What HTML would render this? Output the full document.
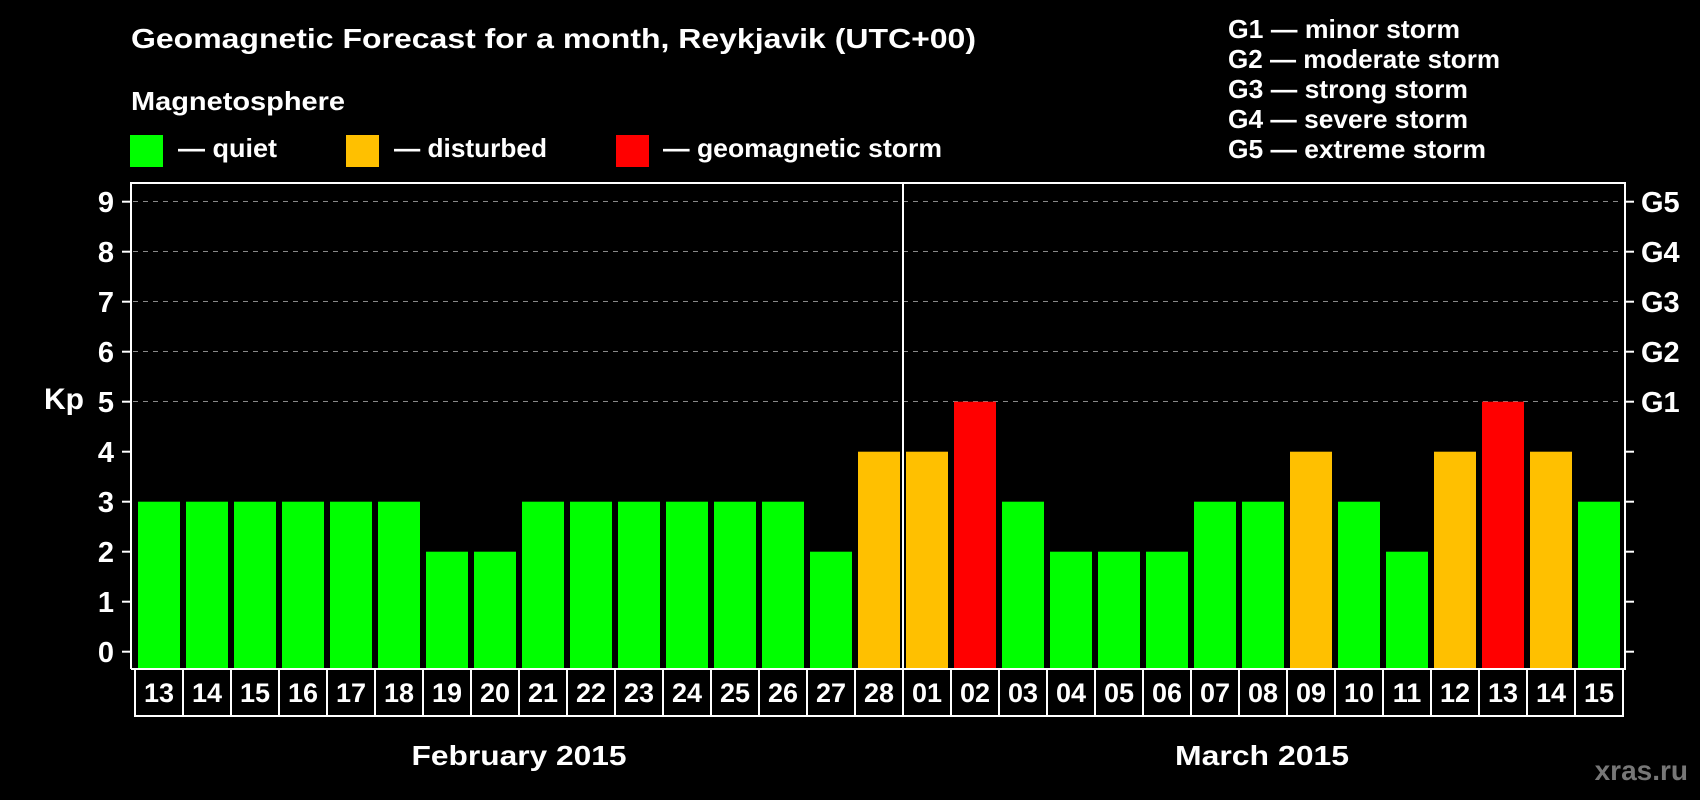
<!DOCTYPE html>
<html><head><meta charset="utf-8"><style>
html,body{margin:0;padding:0;background:#000;}
svg{display:block;font-family:"Liberation Sans",Arial,sans-serif;font-weight:bold;}
</style></head><body>
<svg width="1700" height="800" viewBox="0 0 1700 800" xmlns="http://www.w3.org/2000/svg">
<rect width="1700" height="800" fill="#000"/>
<g fill="#fff">
<text x="131" y="48" font-size="28" textLength="845" lengthAdjust="spacingAndGlyphs">Geomagnetic Forecast for a month, Reykjavik (UTC+00)</text>
<text x="131" y="110" font-size="26" textLength="214" lengthAdjust="spacingAndGlyphs">Magnetosphere</text>
<text x="178" y="157" font-size="26" textLength="99" lengthAdjust="spacingAndGlyphs">— quiet</text>
<text x="394" y="157" font-size="26" textLength="153" lengthAdjust="spacingAndGlyphs">— disturbed</text>
<text x="663" y="157" font-size="26" textLength="279" lengthAdjust="spacingAndGlyphs">— geomagnetic storm</text>
<text x="1228" y="38" font-size="26" textLength="232" lengthAdjust="spacingAndGlyphs">G1 — minor storm</text>
<text x="1228" y="68" font-size="26" textLength="272" lengthAdjust="spacingAndGlyphs">G2 — moderate storm</text>
<text x="1228" y="98" font-size="26" textLength="240" lengthAdjust="spacingAndGlyphs">G3 — strong storm</text>
<text x="1228" y="128" font-size="26" textLength="240" lengthAdjust="spacingAndGlyphs">G4 — severe storm</text>
<text x="1228" y="158" font-size="26" textLength="258" lengthAdjust="spacingAndGlyphs">G5 — extreme storm</text>
</g>
<rect x="130" y="135" width="33" height="32" fill="#00ff00"/>
<rect x="346" y="135" width="33" height="32" fill="#ffc000"/>
<rect x="616" y="135" width="33" height="32" fill="#ff0000"/>

<g stroke="#8a8a8a" stroke-width="1" stroke-dasharray="5,5">
<line x1="133" y1="201.5" x2="1623" y2="201.5"/>
<line x1="133" y1="251.5" x2="1623" y2="251.5"/>
<line x1="133" y1="301.5" x2="1623" y2="301.5"/>
<line x1="133" y1="351.5" x2="1623" y2="351.5"/>
<line x1="133" y1="401.5" x2="1623" y2="401.5"/>
</g>

<g>
<rect x="138" y="501.7" width="42" height="167.3" fill="#00ff00"/>
<rect x="186" y="501.7" width="42" height="167.3" fill="#00ff00"/>
<rect x="234" y="501.7" width="42" height="167.3" fill="#00ff00"/>
<rect x="282" y="501.7" width="42" height="167.3" fill="#00ff00"/>
<rect x="330" y="501.7" width="42" height="167.3" fill="#00ff00"/>
<rect x="378" y="501.7" width="42" height="167.3" fill="#00ff00"/>
<rect x="426" y="551.7" width="42" height="117.3" fill="#00ff00"/>
<rect x="474" y="551.7" width="42" height="117.3" fill="#00ff00"/>
<rect x="522" y="501.7" width="42" height="167.3" fill="#00ff00"/>
<rect x="570" y="501.7" width="42" height="167.3" fill="#00ff00"/>
<rect x="618" y="501.7" width="42" height="167.3" fill="#00ff00"/>
<rect x="666" y="501.7" width="42" height="167.3" fill="#00ff00"/>
<rect x="714" y="501.7" width="42" height="167.3" fill="#00ff00"/>
<rect x="762" y="501.7" width="42" height="167.3" fill="#00ff00"/>
<rect x="810" y="551.7" width="42" height="117.3" fill="#00ff00"/>
<rect x="858" y="451.7" width="42" height="217.3" fill="#ffc000"/>
<rect x="906" y="451.7" width="42" height="217.3" fill="#ffc000"/>
<rect x="954" y="401.7" width="42" height="267.3" fill="#ff0000"/>
<rect x="1002" y="501.7" width="42" height="167.3" fill="#00ff00"/>
<rect x="1050" y="551.7" width="42" height="117.3" fill="#00ff00"/>
<rect x="1098" y="551.7" width="42" height="117.3" fill="#00ff00"/>
<rect x="1146" y="551.7" width="42" height="117.3" fill="#00ff00"/>
<rect x="1194" y="501.7" width="42" height="167.3" fill="#00ff00"/>
<rect x="1242" y="501.7" width="42" height="167.3" fill="#00ff00"/>
<rect x="1290" y="451.7" width="42" height="217.3" fill="#ffc000"/>
<rect x="1338" y="501.7" width="42" height="167.3" fill="#00ff00"/>
<rect x="1386" y="551.7" width="42" height="117.3" fill="#00ff00"/>
<rect x="1434" y="451.7" width="42" height="217.3" fill="#ffc000"/>
<rect x="1482" y="401.7" width="42" height="267.3" fill="#ff0000"/>
<rect x="1530" y="451.7" width="42" height="217.3" fill="#ffc000"/>
<rect x="1578" y="501.7" width="42" height="167.3" fill="#00ff00"/>
</g>

<g fill="#fff" font-size="27" text-anchor="middle">
<text x="159" y="702">13</text><text x="207" y="702">14</text><text x="255" y="702">15</text><text x="303" y="702">16</text>
<text x="351" y="702">17</text><text x="399" y="702">18</text><text x="447" y="702">19</text><text x="495" y="702">20</text>
<text x="543" y="702">21</text><text x="591" y="702">22</text><text x="639" y="702">23</text><text x="687" y="702">24</text>
<text x="735" y="702">25</text><text x="783" y="702">26</text><text x="831" y="702">27</text><text x="879" y="702">28</text>
<text x="927" y="702">01</text><text x="975" y="702">02</text><text x="1023" y="702">03</text><text x="1071" y="702">04</text>
<text x="1119" y="702">05</text><text x="1167" y="702">06</text><text x="1215" y="702">07</text><text x="1263" y="702">08</text>
<text x="1311" y="702">09</text><text x="1359" y="702">10</text><text x="1407" y="702">11</text><text x="1455" y="702">12</text>
<text x="1503" y="702">13</text><text x="1551" y="702">14</text><text x="1599" y="702">15</text>
</g>

<g stroke="#fff" stroke-width="2">
<line x1="183" y1="669" x2="183" y2="716"/><line x1="231" y1="669" x2="231" y2="716"/><line x1="279" y1="669" x2="279" y2="716"/>
<line x1="327" y1="669" x2="327" y2="716"/><line x1="375" y1="669" x2="375" y2="716"/><line x1="423" y1="669" x2="423" y2="716"/>
<line x1="471" y1="669" x2="471" y2="716"/><line x1="519" y1="669" x2="519" y2="716"/><line x1="567" y1="669" x2="567" y2="716"/>
<line x1="615" y1="669" x2="615" y2="716"/><line x1="663" y1="669" x2="663" y2="716"/><line x1="711" y1="669" x2="711" y2="716"/>
<line x1="759" y1="669" x2="759" y2="716"/><line x1="807" y1="669" x2="807" y2="716"/><line x1="855" y1="669" x2="855" y2="716"/>
<line x1="903" y1="669" x2="903" y2="716"/><line x1="951" y1="669" x2="951" y2="716"/><line x1="999" y1="669" x2="999" y2="716"/>
<line x1="1047" y1="669" x2="1047" y2="716"/><line x1="1095" y1="669" x2="1095" y2="716"/><line x1="1143" y1="669" x2="1143" y2="716"/>
<line x1="1191" y1="669" x2="1191" y2="716"/><line x1="1239" y1="669" x2="1239" y2="716"/><line x1="1287" y1="669" x2="1287" y2="716"/>
<line x1="1335" y1="669" x2="1335" y2="716"/><line x1="1383" y1="669" x2="1383" y2="716"/><line x1="1431" y1="669" x2="1431" y2="716"/>
<line x1="1479" y1="669" x2="1479" y2="716"/><line x1="1527" y1="669" x2="1527" y2="716"/><line x1="1575" y1="669" x2="1575" y2="716"/>
<!-- ticks -->
<line x1="122" y1="651.7" x2="131" y2="651.7"/><line x1="122" y1="601.7" x2="131" y2="601.7"/><line x1="122" y1="551.7" x2="131" y2="551.7"/>
<line x1="122" y1="501.7" x2="131" y2="501.7"/><line x1="122" y1="451.7" x2="131" y2="451.7"/><line x1="122" y1="401.7" x2="131" y2="401.7"/>
<line x1="122" y1="351.7" x2="131" y2="351.7"/><line x1="122" y1="301.7" x2="131" y2="301.7"/><line x1="122" y1="251.7" x2="131" y2="251.7"/>
<line x1="122" y1="201.7" x2="131" y2="201.7"/>
<line x1="1625" y1="651.7" x2="1634" y2="651.7"/><line x1="1625" y1="601.7" x2="1634" y2="601.7"/><line x1="1625" y1="551.7" x2="1634" y2="551.7"/>
<line x1="1625" y1="501.7" x2="1634" y2="501.7"/><line x1="1625" y1="451.7" x2="1634" y2="451.7"/><line x1="1625" y1="401.7" x2="1634" y2="401.7"/>
<line x1="1625" y1="351.7" x2="1634" y2="351.7"/><line x1="1625" y1="301.7" x2="1634" y2="301.7"/><line x1="1625" y1="251.7" x2="1634" y2="251.7"/>
<line x1="1625" y1="201.7" x2="1634" y2="201.7"/>
</g>

<g fill="#fff" font-size="29" text-anchor="end">
<text x="114" y="662">0</text><text x="114" y="612">1</text><text x="114" y="562">2</text><text x="114" y="512">3</text>
<text x="114" y="462">4</text><text x="114" y="412">5</text><text x="114" y="362">6</text><text x="114" y="312">7</text>
<text x="114" y="262">8</text><text x="114" y="212">9</text>
</g>
<g fill="#fff" font-size="29">
<text x="1641" y="412">G1</text><text x="1641" y="362">G2</text><text x="1641" y="312">G3</text>
<text x="1641" y="262">G4</text><text x="1641" y="212">G5</text>
</g>

<g stroke="#fff" stroke-width="2" fill="none">
<polyline points="131,669 131,183 1625,183 1625,669 131,669"/>
<line x1="903" y1="183" x2="903" y2="669"/>
<polyline points="135,669 135,716 1623,716 1623,669"/>
</g>

<g fill="#fff">
<text x="64" y="409" font-size="30" text-anchor="middle">Kp</text>
<text x="519" y="765" font-size="28" text-anchor="middle" textLength="215" lengthAdjust="spacingAndGlyphs">February 2015</text>
<text x="1262" y="765" font-size="28" text-anchor="middle" textLength="174" lengthAdjust="spacingAndGlyphs">March 2015</text>
</g>
<text x="1688" y="780" font-size="28" fill="#777" text-anchor="end">xras.ru</text>
</svg>
</body></html>
